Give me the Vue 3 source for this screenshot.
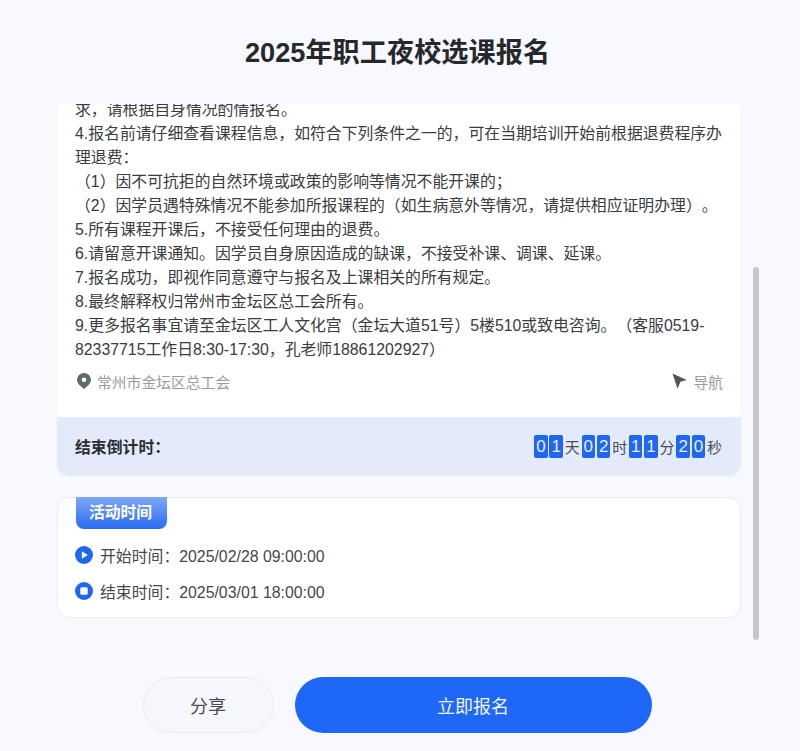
<template>
  <div class="page">
    <header class="head">
      <h1>2025年职工夜校选课报名</h1>
    </header>

    <main class="main">
      <div class="scroller">
        <section class="card">
          <div class="rules">
            <p v-for="line in rules" :key="line">{{ line }}</p>
          </div>
          <div class="place">
            <span class="place-name">
              <svg width="14" height="16" viewBox="0 0 14 16">
                <path fill="#5f6b68" fill-rule="evenodd" d="M7 0a7 6.800 0 0 1 7 6.800C14 10.500 9.800 13.800 7 16 4.200 13.800 0 10.500 0 6.800A7 6.800 0 0 1 7 0zm0 4.500a2.300 2.300 0 1 0 0 4.600 2.300 2.300 0 0 0 0-4.600z" />
              </svg>
              常州市金坛区总工会
            </span>
            <span class="nav">
              <svg width="15" height="16" viewBox="0 0 15 16">
                <path fill="#555" d="M.5.5 14.800 7 8.500 8.800 5.500 15.800z" />
              </svg>
              导航
            </span>
          </div>
          <div class="countdown">
            <b>结束倒计时：</b>
            <div class="clock">
              <template v-for="part in countdown" :key="part.unit">
                <i v-for="(d, n) in part.num" :key="n">{{ d }}</i>
                <span>{{ part.unit }}</span>
              </template>
            </div>
          </div>
        </section>

        <section class="time-card">
          <div class="tab">活动时间</div>
          <div class="time-row">
            <svg width="18" height="18" viewBox="0 0 18 18">
              <circle cx="9" cy="9" r="9" fill="#1f66f2" />
              <path fill="#fff" d="M6.800 5.200 12.800 9l-6 3.800z" />
            </svg>
            开始时间：2025/02/28 09:00:00
          </div>
          <div class="time-row">
            <svg width="18" height="18" viewBox="0 0 18 18">
              <circle cx="9" cy="9" r="9" fill="#1f66f2" />
              <rect x="5.300" y="5.300" width="7.400" height="7.400" rx="1.500" fill="#fff" />
            </svg>
            结束时间：2025/03/01 18:00:00
          </div>
        </section>
      </div>
      <div class="thumb"></div>
    </main>

    <footer class="foot">
      <button class="share">分享</button>
      <button class="apply">立即报名</button>
    </footer>
  </div>
</template>

<script setup>
const rules = [
  '求，请根据自身情况酌情报名。',
  '4.报名前请仔细查看课程信息，如符合下列条件之一的，可在当期培训开始前根据退费程序办理退费：',
  '（1）因不可抗拒的自然环境或政策的影响等情况不能开课的；',
  '（2）因学员遇特殊情况不能参加所报课程的（如生病意外等情况，请提供相应证明办理）。',
  '5.所有课程开课后，不接受任何理由的退费。',
  '6.请留意开课通知。因学员自身原因造成的缺课，不接受补课、调课、延课。',
  '7.报名成功，即视作同意遵守与报名及上课相关的所有规定。',
  '8.最终解释权归常州市金坛区总工会所有。',
  '9.更多报名事宜请至金坛区工人文化宫（金坛大道51号）5楼510或致电咨询。（客服0519-82337715工作日8:30-17:30，孔老师18861202927）'
]

const countdown = [
  { num: '01', unit: '天' },
  { num: '02', unit: '时' },
  { num: '11', unit: '分' },
  { num: '20', unit: '秒' }
]
</script>

<style>
html, body {
  margin: 0;
  background: #f8f9fe;
}
</style>

<style scoped>
.page {
  height: 751px;
  display: flex;
  flex-direction: column;
  overflow: hidden;
  background: #f8f9fe;
  font-family: "Liberation Sans", "Noto Sans CJK SC", sans-serif;
  color: #3a3c42;
  text-spacing-trim: space-all;
}

.head {
  height: 104px;
  flex: none;
}

.head h1 {
  margin: 0;
  padding-top: 35px;
  padding-right: 5px;
  text-align: center;
  font-size: 27.200px;
  line-height: 36px;
  font-weight: 700;
  color: #26282c;
}

.main {
  position: relative;
  flex: 1;
  min-height: 0;
}

.scroller {
  height: 100%;
  overflow: hidden;
  padding: 0 59px 0 57px;
}

.card {
  margin-top: -6px;
  background: #fff;
  border-radius: 12px;
  overflow: hidden;
  box-shadow: 0 0 2px rgba(60, 80, 130, .08);
}

.rules {
  padding: 0 18px;
  font-size: 15.850px;
  line-height: 24px;
  color: #3a3c40;
}

.rules p {
  margin: 0;
}

.place {
  display: flex;
  justify-content: space-between;
  align-items: center;
  height: 38px;
  padding: 0 18px 0 20px;
  font-size: 14.800px;
  color: #9a9c9f;
}

.place-name,
.nav {
  display: flex;
  align-items: center;
  gap: 6px;
}

.countdown {
  display: flex;
  justify-content: space-between;
  align-items: center;
  height: 59px;
  margin-top: 17px;
  padding: 0 19px 0 18px;
  background: #e3ebfb;
}

.countdown b {
  font-size: 15.850px;
  color: #2b2d33;
}

.clock {
  display: flex;
  align-items: center;
  gap: 1.800px;
  font-size: 15px;
  color: #4a4d55;
}

.clock i {
  width: 13.500px;
  height: 23px;
  border-radius: 2px;
  background: #1f66f2;
  color: #e8efff;
  font-style: normal;
  font-size: 17px;
  line-height: 23px;
  text-align: center;
}

.time-card {
  margin-top: 21px;
  height: 121px;
  box-sizing: border-box;
  border: 1px solid #e8ebf2;
  border-radius: 12px;
  background: #fff;
  padding: 0 18px;
}

.tab {
  width: 91px;
  height: 32px;
  box-sizing: border-box;
  padding-right: 2px;
  margin-top: -1px;
  border-radius: 0 0 8px 8px;
  background: linear-gradient(180deg, #7ea6f7, #2a6cf3);
  color: #fff;
  font-size: 15.800px;
  font-weight: 700;
  line-height: 31px;
  text-align: center;
}

.time-row {
  display: flex;
  align-items: center;
  gap: 7px;
  height: 36px;
  margin-left: -1px;
  font-size: 15.850px;
  color: #45474c;
}

.tab + .time-row {
  margin-top: 8px;
}

.thumb {
  position: absolute;
  top: 163px;
  right: 41px;
  width: 6px;
  height: 373px;
  border-radius: 3px;
  background: #c6c7c9;
}

.foot {
  flex: none;
  height: 101px;
  display: flex;
  justify-content: center;
  gap: 21px;
  box-sizing: border-box;
  padding: 27px 6px 18px 0;
}

.foot button {
  font-family: inherit;
  font-size: 18px;
  height: 56px;
  border-radius: 28px;
  cursor: pointer;
}

.share {
  width: 131px;
  border: 1px solid #e8ebf2;
  background: #f5f7fc;
  color: #4a4c55;
}

.apply {
  width: 357px;
  border: 0;
  background: #1f67f6;
  color: #f2f6ff;
}
</style>
